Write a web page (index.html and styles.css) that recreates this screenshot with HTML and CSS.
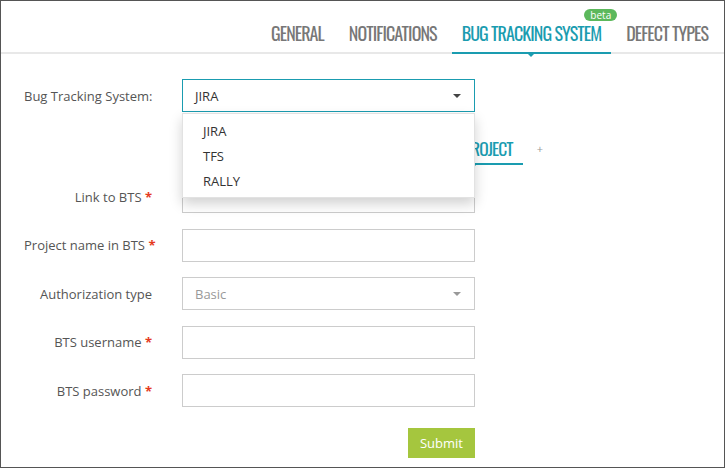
FILE: index.html
```html
<!DOCTYPE html>
<html>
<head>
<meta charset="utf-8">
<link rel="stylesheet" href="styles.css">
</head>
<body>
<div class="frame">
  <header class="tabs">
    <a class="tab">General</a>
    <a class="tab">Notifications</a>
    <a class="tab active">Bug Tracking System<span class="badge">beta</span></a>
    <a class="tab">Defect Types</a>
  </header>
  <main class="form">
    <div class="row">
      <label class="lbl lbl-left">Bug Tracking System:</label>
      <div class="field select focused">
        <span class="value">JIRA</span>
        <ul class="menu">
          <li>JIRA</li>
          <li>TFS</li>
          <li>RALLY</li>
        </ul>
      </div>
    </div>
    <div class="subtabs">
      <span class="subtab">New Project</span>
      <span class="plus">+</span>
    </div>
    <div class="rows">
      <div class="row">
        <label class="lbl">Link to BTS <span class="req">*</span></label>
        <div class="field"></div>
      </div>
      <div class="row">
        <label class="lbl">Project name in BTS <span class="req">*</span></label>
        <div class="field"></div>
      </div>
      <div class="row">
        <label class="lbl">Authorization type</label>
        <div class="field select muted"><span class="value">Basic</span></div>
      </div>
      <div class="row">
        <label class="lbl">BTS username <span class="req">*</span></label>
        <div class="field"></div>
      </div>
      <div class="row">
        <label class="lbl">BTS password <span class="req">*</span></label>
        <div class="field"></div>
      </div>
    </div>
    <div class="actions">
      <button class="submit">Submit</button>
    </div>
  </main>
</div>
</body>
</html>
```
FILE: styles.css
```css
* { box-sizing: border-box; }
html, body { margin: 0; padding: 0; background: #fff; }
body { font-family: "Open Sans", "DejaVu Sans", sans-serif; font-size: 13px; color: #555; }

.frame {
  width: 725px;
  height: 468px;
  border: 1px solid #555;
  background: #fff;
  overflow: hidden;
}

/* top tabs */
.tabs {
  height: 53px;
  border-bottom: 2px solid #e8e8e8;
  display: flex;
  justify-content: flex-end;
  align-items: flex-end;
  padding-right: 6px;
}
.tab {
  position: relative;
  display: block;
  padding: 0 10px 7px;
  margin-left: 5px;
  margin-bottom: -2px;
  border-bottom: 2px solid transparent;
  font-family: "Oswald", "Roboto Condensed", "Liberation Sans Narrow", "DejaVu Sans Condensed", "DejaVu Sans", sans-serif;
  font-stretch: condensed;
  font-size: 18px;
  letter-spacing: -0.9px;
  line-height: 24px;
  text-transform: uppercase;
  color: #777;
  white-space: nowrap;
}
.tab.active {
  color: #1a9cb0;
  border-bottom-color: #1a9cb0;
}
.tab.active::after {
  content: "";
  position: absolute;
  left: 50%;
  top: 100%;
  margin-left: -5px;
  border-top: 5px solid #1a9cb0;
  border-left: 5px solid transparent;
  border-right: 5px solid transparent;
}
.badge {
  position: absolute;
  top: -12px;
  right: -6px;
  height: 12px;
  padding: 0 6px;
  border-radius: 6px;
  background: #5cb85c;
  color: #fff;
  font-family: "Open Sans", sans-serif;
  font-stretch: normal;
  font-size: 10px;
  letter-spacing: 0;
  line-height: 12px;
  text-transform: none;
}

/* form */
.form {
  padding: 25px 0 0 23px;
}
.row {
  display: flex;
  align-items: center;
}
.lbl {
  width: 128px;
  margin-right: 30px;
  text-align: right;
  color: #555;
  white-space: nowrap;
}
.lbl-left { text-align: left; }
.req {
  color: #e53a20;
  font-weight: bold;
}
.field {
  position: relative;
  width: 293px;
  height: 33px;
  border: 1px solid #ccc;
  background: #fff;
  display: flex;
  align-items: center;
  padding: 0 12px;
}
.field.focused { border-color: #1a9cb0; }
.value { color: #333; }
.muted .value { color: #999; }
.select::after {
  content: "";
  position: absolute;
  right: 13px;
  top: 50%;
  margin-top: -2px;
  border-top: 4px solid #444;
  border-left: 4px solid transparent;
  border-right: 4px solid transparent;
}
.select.muted::after { border-top-color: #999; }

.menu {
  position: absolute;
  z-index: 5;
  left: -1px;
  right: -1px;
  top: 100%;
  margin: 2px 0 0;
  padding: 5px 0 3px;
  list-style: none;
  background: #fff;
  border: 1px solid #e2e2e2;
  box-shadow: 0 6px 12px rgba(0,0,0,0.18);
}
.menu li {
  height: 25px;
  line-height: 25px;
  padding-left: 20px;
  color: #333;
}

.subtabs {
  display: flex;
  align-items: center;
  margin-top: 20px;
  padding-left: 400px;
}
.subtab {
  position: relative;
  padding: 4px 10px 3px;
  border-bottom: 2px solid #1a9cb0;
  font-family: "Oswald", "Roboto Condensed", "Liberation Sans Narrow", "DejaVu Sans Condensed", "DejaVu Sans", sans-serif;
  font-stretch: condensed;
  font-size: 17.5px;
  letter-spacing: -0.9px;
  line-height: 24px;
  text-transform: uppercase;
  color: #1a9cb0;
  white-space: nowrap;
}
.subtab::after {
  content: "";
  position: absolute;
  left: 50%;
  top: 100%;
  margin-left: -5px;
  border-top: 5px solid #1a9cb0;
  border-left: 5px solid transparent;
  border-right: 5px solid transparent;
}
.plus {
  margin-left: 14px;
  color: #999;
  font-size: 11px;
}

.rows {
  margin-top: 15px;
  display: flex;
  flex-direction: column;
  gap: 15.5px;
}

.actions {
  width: 451px;
  margin-top: 21px;
  display: flex;
  justify-content: flex-end;
}
.submit {
  height: 30px;
  padding: 0 12px;
  border: none;
  background: #a5c63e;
  color: #fff;
  font-family: "Open Sans", sans-serif;
  font-size: 13px;
}
```
